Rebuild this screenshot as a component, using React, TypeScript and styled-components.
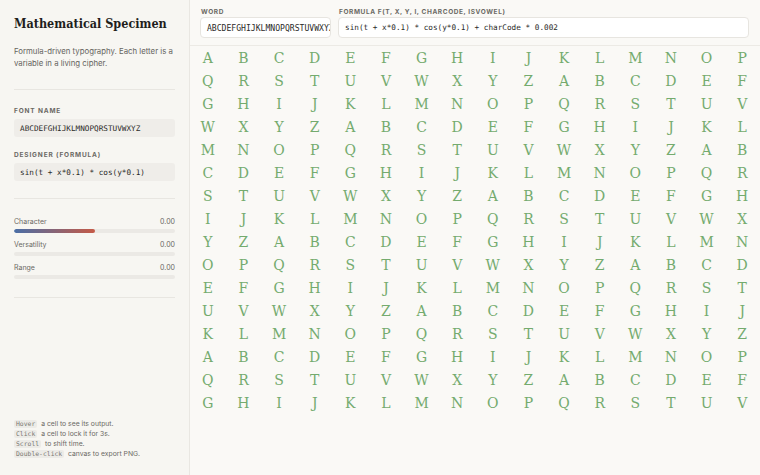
import styled, { createGlobalStyle } from "styled-components"

const GlobalStyle = createGlobalStyle`
  html, body {
    margin: 0;
    padding: 0;
    background: #faf9f6;
  }
  body {
    font-family: Inter, "Noto Sans", sans-serif;
    color: #2b2a28;
  }
`

const Page = styled.div`
  display: flex;
  width: 760px;
  height: 475px;
  overflow: hidden;
`
const Sidebar = styled.aside`
  width: 190px;
  flex-shrink: 0;
  box-sizing: border-box;
  background: #f7f6f2;
  border-right: 1px solid #e9e7e2;
  padding: 14px 14px 0 14px;
  display: flex;
  flex-direction: column;
`
const Title = styled.h1`
  margin: 0;
  font-family: "DejaVu Serif Condensed", "DejaVu Serif", serif;
  font-stretch: condensed;
  font-weight: bold;
  font-size: 12.5px;
  color: #1f1e1c;
  line-height: 20px;
  white-space: nowrap;
`
const Lead = styled.p`
  margin: 11px 0 0 0;
  font-size: 7.8px;
  line-height: 12px;
  color: #66645f;
`
const Divider = styled.div<{ gap?: string }>`
  height: 1px;
  flex-shrink: 0;
  background: #e8e6e1;
  margin: ${props => props.gap ?? "14px 0"};
`
const Label = styled.div`
  font-size: 6.5px;
  line-height: 8px;
  font-weight: 700;
  letter-spacing: 0.85px;
  text-transform: uppercase;
  color: #6b6964;
  margin-bottom: 4px;
`
const Field = styled.div`
  flex-shrink: 0;
  background: #efede9;
  border-radius: 3px;
  height: 18px;
  display: flex;
  align-items: center;
  padding: 0 6px;
  font-family: "DejaVu Sans Mono", monospace;
  font-size: 7.7px;
  color: #2b2a28;
  margin-bottom: 14px;
  white-space: nowrap;
  overflow: hidden;
`
const Metric = styled.div`
  margin-bottom: 7px;
`
const MetricHead = styled.div`
  display: flex;
  justify-content: space-between;
  font-size: 7px;
  color: #6b6964;
  line-height: 10px;
`
const Track = styled.div`
  margin-top: 2px;
  height: 4px;
  border-radius: 2px;
  background: #ebe9e5;
  overflow: hidden;
`
const Fill = styled.div`
  height: 100%;
  border-radius: 2px;
  background: linear-gradient(90deg, #4a6ea6, #c55a47);
`
const Hints = styled.div`
  margin-top: auto;
  padding-bottom: 16px;
  font-size: 6.8px;
  color: #6b6964;
  line-height: 10px;
`
const Key = styled.code`
  font-family: "DejaVu Sans Mono", monospace;
  font-size: 6.4px;
  background: #ecebe7;
  color: #7a7873;
  padding: 0 2px;
  border-radius: 2px;
  margin-right: 2px;
`
const Main = styled.main`
  flex: 1;
  display: flex;
  flex-direction: column;
  min-width: 0;
`
const Header = styled.header`
  height: 46px;
  flex-shrink: 0;
  box-sizing: border-box;
  border-bottom: 1px solid #eceae5;
  padding: 8px 11px 0 10px;
  display: flex;
  gap: 7px;
`
const Group = styled.div<{ grow?: boolean; width?: string }>`
  display: flex;
  flex-direction: column;
  flex: ${props => (props.grow ? "1" : "none")};
  width: ${props => props.width ?? "auto"};
  min-width: 0;
`
const HeadLabel = styled.div`
  font-size: 6.5px;
  font-weight: 700;
  letter-spacing: 0.6px;
  text-transform: uppercase;
  color: #6b6964;
  white-space: nowrap;
  line-height: 8px;
  margin-bottom: 1px;
  padding-left: 1px;
`
const Input = styled.div<{ size?: string }>`
  height: 21px;
  box-sizing: border-box;
  background: #fff;
  border: 1px solid #e7e5e0;
  border-radius: 4px;
  display: flex;
  align-items: center;
  padding: 0 6px;
  font-family: "DejaVu Sans Mono", monospace;
  font-size: ${props => props.size ?? "7.7px"};
  color: #2b2a28;
  white-space: nowrap;
  overflow: hidden;
`
const Grid = styled.div`
  display: grid;
  grid-template-columns: repeat(16, 1fr);
  grid-auto-rows: 23.07px;
`
const Cell = styled.div`
  display: flex;
  align-items: center;
  justify-content: center;
  font-family: "DejaVu Serif", serif;
  font-size: 14px;
  color: #74ab6e;
`

const ALPHA = "ABCDEFGHIJKLMNOPQRSTUVWXYZ"

export default function App() {
  const cells = Array.from({ length: 256 }, (_, i) => ALPHA[i % 26])
  const metrics = [
    { name: "Character", value: "0.00", fill: 50 },
    { name: "Versatility", value: "0.00", fill: 0 },
    { name: "Range", value: "0.00", fill: 0 },
  ]
  return (
    <>
      <GlobalStyle />
      <Page>
        <Sidebar>
          <Title>Mathematical Specimen</Title>
          <Lead>Formula-driven typography. Each letter is a variable in a living cipher.</Lead>
          <Divider gap="20px 0 17px 0" />
          <Label>Font name</Label>
          <Field>ABCDEFGHIJKLMNOPQRSTUVWXYZ</Field>
          <Label>Designer (formula)</Label>
          <Field>sin(t + x*0.1) * cos(y*0.1)</Field>
          <Divider gap="3px 0 18px 0" />
          {metrics.map(m => (
            <Metric key={m.name}>
              <MetricHead>
                <span>{m.name}</span>
                <span>{m.value}</span>
              </MetricHead>
              <Track>
                <Fill style={{ width: `${m.fill}%` }} />
              </Track>
            </Metric>
          ))}
          <Divider gap="11px 0 0 0" />
          <Hints>
            <div><Key>Hover</Key> a cell to see its output.</div>
            <div><Key>Click</Key> a cell to lock it for 3s.</div>
            <div><Key>Scroll</Key> to shift time.</div>
            <div><Key>Double-click</Key> canvas to export PNG.</div>
          </Hints>
        </Sidebar>
        <Main>
          <Header>
            <Group width="131px">
              <HeadLabel>Word</HeadLabel>
              <Input size="8.1px">ABCDEFGHIJKLMNOPQRSTUVWXYZ</Input>
            </Group>
            <Group grow>
              <HeadLabel>Formula f(t, x, y, i, charCode, isVowel)</HeadLabel>
              <Input>sin(t + x*0.1) * cos(y*0.1) + charCode * 0.002</Input>
            </Group>
          </Header>
          <Grid>
            {cells.map((c, i) => (
              <Cell key={i}>{c}</Cell>
            ))}
          </Grid>
        </Main>
      </Page>
    </>
  )
}
